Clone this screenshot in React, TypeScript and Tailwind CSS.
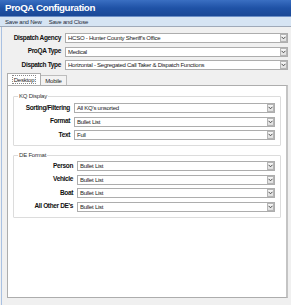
import React from 'react';

const Chevron = () => (
  <svg width="5" height="4" viewBox="0 0 5 4" className="block">
    <path d="M0.5 0.8 L2.5 2.8 L4.5 0.8" fill="none" stroke="#4a4a4a" strokeWidth="1" />
  </svg>
);

const Select = ({ value, className = '' }: { value: string; className?: string }) => (
  <div
    className={`h-[10px] flex items-center border border-[#adadad] bg-white ${className}`}
  >
    <span className="flex-1 pl-[2px] text-[6px] tracking-[-0.25px] leading-none text-[#1a1a1a] whitespace-nowrap overflow-hidden">
      {value}
    </span>
    <div className="h-[8px] w-[7px] flex items-center justify-center border border-[#b5b5b5] bg-gradient-to-b from-[#f6f6f6] to-[#dedede]">
      <Chevron />
    </div>
  </div>
);

const Row = ({ label, value, labelW }: { label: string; value: string; labelW: string }) => (
  <div className="flex items-center gap-[4px]">
    <span className={`${labelW} text-right font-bold text-[6.5px] tracking-[-0.35px] leading-none text-[#111] whitespace-nowrap`}>
      {label}
    </span>
    <Select value={value} className="flex-1" />
  </div>
);

const GroupBox = ({ title, children, className = '' }: { title: string; children: React.ReactNode; className?: string }) => (
  <div className={`relative border border-[#dcdcdc] rounded-[1px] ${className}`}>
    <span className="absolute -top-[4px] left-[4px] bg-white px-[1px] text-[6px] tracking-[-0.2px] leading-none text-[#333]">
      {title}
    </span>
    {children}
  </div>
);

export default function App() {
  return (
    <div
      className="w-[291px] h-[305px] bg-[#f0f0f0] flex flex-col overflow-hidden"
      style={{ fontFamily: '"Liberation Sans", Arial, sans-serif' }}
    >
      {/* title */}
      <div className="h-[17px] flex items-center px-[5px] bg-gradient-to-b from-[#3a6fc2] via-[#1f52a6] to-[#1a4896] border-b border-[#6d8fc6]">
        <span className="text-white font-bold text-[9.8px] tracking-[-0.4px] leading-none">
          ProQA Configuration
        </span>
      </div>

      {/* toolbar */}
      <div className="h-[10px] flex items-center gap-[7px] px-[5px] bg-[#d6e4f3] border-b border-[#9fa9b8]">
        <span className="text-[6px] tracking-[-0.2px] leading-none text-[#1e2a3a]">Save and New</span>
        <span className="text-[6px] tracking-[-0.2px] leading-none text-[#1e2a3a]">Save and Close</span>
      </div>

      {/* body */}
      <div className="flex-1 flex flex-col ml-[1px] border-l border-[#a9c1e2] pr-[2px]">
        <div className="flex flex-col gap-[3.5px] pt-[6px] pr-[1px]">
          <Row label="Dispatch Agency" value="HCSO - Hunter County Sheriff's Office" labelW="w-[59px]" />
          <Row label="ProQA Type" value="Medical" labelW="w-[59px]" />
          <Row label="Dispatch Type" value="Horizontal - Segregated Call Taker & Dispatch Functions" labelW="w-[59px]" />
        </div>

        {/* tabs */}
        <div className="flex items-end pl-[5px] mt-[3px] h-[12px]">
          <div className="h-[12px] w-[34px] flex items-center justify-center bg-white border border-b-0 border-[#adadad] text-[6px] tracking-[-0.2px] leading-none text-[#222]">
            <span className="border border-dotted border-[#888] px-[1px] py-[0.5px]">Desktop</span>
          </div>
          <div className="h-[10px] w-[26px] flex items-center justify-center bg-[#f3f3f3] border border-l-0 border-b-0 border-[#bdbdbd] text-[6px] tracking-[-0.2px] leading-none text-[#222]">
            Mobile
          </div>
        </div>

        <div className="h-[213px] ml-[5px] mr-[1px] bg-white border border-[#adadad] border-r-2 border-r-[#c4c4c4] flex flex-col px-[5px] pt-[10px]">
          <GroupBox title="KQ Display" className="pt-[6px] pb-[5px] pr-[5px]">
            <div className="flex flex-col gap-[3.5px]">
              <Row label="Sorting/Filtering" value="All KQ's unsorted" labelW="w-[56px]" />
              <Row label="Format" value="Bullet List" labelW="w-[56px]" />
              <Row label="Text" value="Full" labelW="w-[56px]" />
            </div>
          </GroupBox>

          <GroupBox title="DE Format" className="mt-[9px] pt-[5px] pb-[5px] pr-[5px]">
            <div className="flex flex-col gap-[3.5px]">
              <Row label="Person" value="Bullet List" labelW="w-[59px]" />
              <Row label="Vehicle" value="Bullet List" labelW="w-[59px]" />
              <Row label="Boat" value="Bullet List" labelW="w-[59px]" />
              <Row label="All Other DE's" value="Bullet List" labelW="w-[59px]" />
            </div>
          </GroupBox>
        </div>
      </div>
    </div>
  );
}
